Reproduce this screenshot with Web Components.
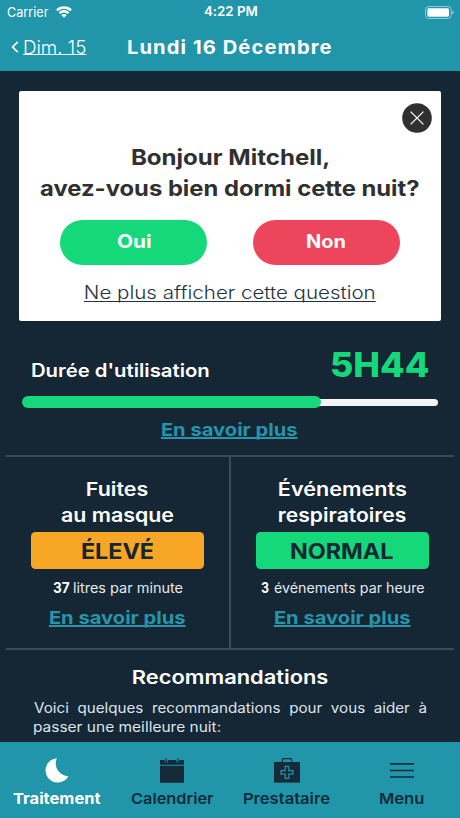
<!DOCTYPE html>
<html lang="fr">
<head>
<meta charset="utf-8">
<title>Lundi 16 Décembre</title>
<style>
  html, body { margin: 0; height: 100%; }
  body { background: #152634; font-family: Inter, "Open Sans", sans-serif; overflow: hidden; }
</style>
</head>
<body>
<sleep-app></sleep-app>
<script>
const define = (name, html, setup) => {
  const t = document.createElement('template');
  t.innerHTML = html;
  customElements.define(name, class extends HTMLElement {
    connectedCallback() {
      if (this.shadowRoot) return;
      this.attachShadow({ mode: 'open' }).append(t.content.cloneNode(true));
      if (setup) setup(this, this.shadowRoot);
    }
  });
};

/* One line of text stretched so that its ink spans the width given in w. */
const ctx = document.createElement('canvas').getContext('2d');
define('fit-text', `
  <style>
    :host { display: block; flex: none; text-align: left; }
    span { display: block; width: max-content; white-space: pre; transform-origin: 0 50%; font-variant-ligatures: none; font-feature-settings: "calt" 0; }
    :host([u]) span { text-decoration: underline; text-decoration-skip-ink: none;
      text-decoration-thickness: var(--ut, 1.3px); text-underline-offset: var(--uo, 1.6px); }
  </style><span><slot></slot></span>`, (el, root) => {
  const w = +el.getAttribute('w'), size = +el.getAttribute('s'), weight = el.getAttribute('wt') || 400;
  const line = el.getAttribute('l') || 24, ls = el.getAttribute('ls') || 0, ws = el.getAttribute('ws') || 0;
  Object.assign(el.style, { width: w + 'px', height: line + 'px', lineHeight: line + 'px',
    fontSize: size + 'px', fontWeight: weight, letterSpacing: ls + 'px', wordSpacing: ws + 'px' });
  ctx.font = `${weight} ${size}px Inter, "Open Sans", sans-serif`;
  ctx.letterSpacing = ls + 'px';
  ctx.wordSpacing = ws + 'px';
  const m = ctx.measureText(el.textContent);
  const k = w / (m.actualBoundingBoxRight + m.actualBoundingBoxLeft);
  root.querySelector('span').style.transform = `translateX(${m.actualBoundingBoxLeft * k}px) scaleX(${k})`;
});

define('status-bar', `
  <style>
    :host { display: grid; grid-template-columns: 1fr auto 1fr; align-items: center; height: 24px; padding: 0 6px 0 7px; color: #fff; }
    div { display: flex; align-items: center; gap: 7px; }
    svg { display: block; }
    .r { justify-content: flex-end; }
  </style>
  <div><fit-text w="41.5" s="13" l="24">Carrier</fit-text>
    <svg width="16" height="12" viewBox="0 0 16 12" fill="none" stroke="#fff" stroke-width="2.3">
      <path d="M.9 4.4a10.1 10.1 0 0 1 14.2 0"/><path d="M3.5 7.1a6.4 6.4 0 0 1 9 0"/><path d="M8 11.8 5.4 9.1a3.8 3.8 0 0 1 5.2 0z" fill="#fff" stroke="none"/></svg></div>
  <fit-text w="53" s="12.8" wt="600" l="24">4:22 PM</fit-text>
  <div class="r"><svg width="29" height="13" viewBox="0 0 29 13"><rect x=".5" y=".5" width="25.6" height="12" rx="3.2" fill="none" stroke="#fff" stroke-opacity=".5"/><rect x="2.4" y="2.3" width="21.6" height="8.4" rx="1.4" fill="#fff"/><path d="M27.3 4.6v3.8q1.4-.6 1.4-1.9t-1.4-1.9z" fill="#fff" opacity=".6"/></svg></div>`);

define('day-header', `
  <style>
    :host { display: block; height: 71px; background: #2195a9; color: #fff; }
    nav { display: flex; align-items: center; padding: 10.5px 0 0 11px; }
    a { display: flex; align-items: center; gap: 4.5px; width: 117px; }
  </style>
  <status-bar></status-bar>
  <nav><a><svg width="8" height="12" viewBox="0 0 8 12" fill="none" stroke="#fff" stroke-width="1.7"><path d="M6.8.8 1.6 6l5.2 5.2"/></svg><fit-text u w="61.5" s="18.2" wt="300" style="--uo:0.3px">Dim. 15</fit-text></a>
  <fit-text w="203.5" s="18.6" wt="700" ls="1">Lundi 16 Décembre</fit-text></nav>`);

define('pill-button', `
  <style>:host { display: flex; justify-content: center; box-sizing: border-box; width: 147px; height: 45px; padding-top: 9px; border-radius: 23px; background: var(--c); color: #fff; }</style><slot></slot>`);

define('question-card', `
  <style>
    :host { display: flex; flex-direction: column; align-items: center; position: relative; box-sizing: border-box;
      width: 422px; height: 229.5px; margin: 20px auto 0; padding-top: 51px; border-radius: 2px; background: #fff; color: #303031; }
    svg { position: absolute; top: 11.5px; right: 9.5px; }
    .b { display: flex; gap: 46px; margin: 16px 0 15.5px; }
    .n { color: #22323f; }
  </style>
  <svg width="30" height="30" viewBox="0 0 30 30"><circle cx="15" cy="15" r="14.8" fill="#303031"/><path d="m8.6 8.6 12.8 12.8m0-12.8L8.6 21.4" stroke="#fff" stroke-width="1.3" fill="none"/></svg>
  <fit-text w="197" s="21.6" wt="700" l="31">Bonjour Mitchell,</fit-text>
  <fit-text w="379.5" s="21.6" wt="700" l="31">avez-vous bien dormi cette nuit?</fit-text>
  <div class="b"><pill-button style="--c:#15d87a"><fit-text w="33.5" s="18.2" wt="700">Oui</fit-text></pill-button><pill-button style="--c:#ed465c"><fit-text w="38.5" s="18.2" wt="700">Non</fit-text></pill-button></div>
  <fit-text class="n" u w="290" s="18" wt="300">Ne plus afficher cette question</fit-text>`);

define('more-link', `
  <style>:host { display: block; color: #2795a9; }</style>
  <fit-text u w="135.5" s="18" wt="700" style="--ut:1.6px;--uo:1px">En savoir plus</fit-text>`);

define('usage-panel', `
  <style>
    :host { display: flex; flex-direction: column; align-items: center; height: 134.5px; color: #fff; }
    .t { display: flex; justify-content: space-between; align-items: flex-start; width: 397px; padding: 32px 0 0 1px; height: 43.5px; }
    .t :last-child { color: #15d87a; margin-top: -9.5px; }
    .bar { display: flex; align-items: center; width: 416px; height: 12px; margin-bottom: 10px; }
    .bar i { width: 298.5px; height: 12px; border-radius: 6px; background: #15d87a; z-index: 1; }
    .bar b { flex: 1; margin-left: -8px; height: 7px; border-radius: 4px; background: #f3f4f5; }
  </style>
  <div class="t"><fit-text w="177.5" s="18.4" wt="600" l="35">Durée d'utilisation</fit-text><fit-text w="98" s="34" wt="800" l="43">5H44</fit-text></div>
  <div class="bar"><i></i><b></b></div>
  <more-link></more-link>`);

define('metric-tile', `
  <style>
    :host { display: flex; flex-direction: column; align-items: center; color: #fff; padding-top: 20px; }
    .badge { display: flex; justify-content: center; box-sizing: border-box; width: 173px; height: 36.5px; padding-top: 7px; margin: 4px 0 7px; border-radius: 4.5px; background: var(--c); color: #152634; }
    .v { display: flex; gap: 4.5px; color: #e4eaef; margin-bottom: 6.5px; }
  </style>
  <slot name="title"></slot>
  <div class="badge"><slot name="level"></slot></div>
  <div class="v"><slot name="value"></slot></div>
  <more-link></more-link>`);

define('metric-grid', `
  <style>
    :host { display: grid; grid-template-columns: 1fr 1fr; box-sizing: border-box; width: 448px; height: 195px; margin: 0 auto;
      border: solid #3b4b5a; border-width: 2.4px 0 2.4px; }
    metric-tile:first-of-type { margin-left: -1px; }
    metric-tile + metric-tile { border-left: 2px solid #3b4b5a; margin-left: -1px; }
    [wt="700"][s="14"] { color: #fff; }
  </style>
  <metric-tile style="--c:#f7a626">
    <fit-text slot="title" w="61" s="18.6" wt="600" l="25.5">Fuites</fit-text>
    <fit-text slot="title" w="113" s="18.6" wt="600" l="25.5">au masque</fit-text>
    <fit-text slot="level" w="71" s="21.3" wt="700">ÉLEVÉ</fit-text>
    <fit-text slot="value" w="16.5" s="14" wt="700">37</fit-text><fit-text slot="value" w="109" s="13.8" wt="400">litres par minute</fit-text>
  </metric-tile>
  <metric-tile style="--c:#15d87a">
    <fit-text slot="title" w="127.5" s="18.6" wt="600" l="25.5">Événements</fit-text>
    <fit-text slot="title" w="127" s="18.6" wt="600" l="25.5">respiratoires</fit-text>
    <fit-text slot="level" w="102.5" s="21.3" wt="700">NORMAL</fit-text>
    <fit-text slot="value" w="8" s="14" wt="700">3</fit-text><fit-text slot="value" w="150.5" s="13.8" wt="400">événements par heure</fit-text>
  </metric-tile>`);

define('advice-panel', `
  <style>
    :host { display: flex; flex-direction: column; align-items: center; flex: 1; padding-top: 16px; color: #fff; }
    p { margin: 8px 0 0; width: 393px; color: #dde5eb; }
  </style>
  <fit-text w="195" s="18.8" wt="600">Recommandations</fit-text>
  <p><fit-text w="392" s="14" l="19" ws="4">Voici quelques recommandations pour vous aider à</fit-text>
  <fit-text w="186" s="14" l="19">passer une meilleure nuit:</fit-text></p>`);

define('tab-item', `
  <style>
    :host { display: flex; flex-direction: column; align-items: center; padding: 15px 1px 0 0; color: #122b3a; }
    :host([active]) { color: #fff; }
    ::slotted(svg) { display: block; margin-bottom: 3px; }
  </style><slot></slot>`);

define('tab-bar', `
  <style>:host { display: grid; grid-template-columns: repeat(4, 115px); height: 76px; background: #2195a9; }</style>
  <tab-item active><svg width="26" height="27" viewBox="0 0 26 27"><path d="M12.8 1.2A12.2 12.2 0 1 0 24.4 19.3 13 13 0 0 1 12.8 1.2z" fill="#fff"/></svg><fit-text w="88" s="15.2" wt="700">Traitement</fit-text></tab-item>
  <tab-item><svg width="26" height="27" viewBox="0 0 26 27"><path fill="#152b3a" d="M1 3h24v4.7H1zM1 8.7h24v17H1z"/><path d="M7.3 2v3.2M18.7 2v3.2" stroke="#2195a9" stroke-width="3"/><path d="M7.3 1.6v4.2M18.7 1.6v4.2" stroke="#152b3a" stroke-width="1.3"/></svg><fit-text w="82.5" s="15.2" wt="600">Calendrier</fit-text></tab-item>
  <tab-item><svg width="26" height="27" viewBox="0 0 26 27"><path fill="#152b3a" d="M0 5h26v20.6H0z"/><path d="M8.4 5V2.9q0-1.3 1.3-1.3h6.6q1.3 0 1.3 1.3V5" fill="none" stroke="#152b3a" stroke-width="1.3"/><path d="M11.2 9.4h3.6v4.2H19v3.6h-4.2v4.2h-3.6v-4.2H7v-3.6h4.2z" fill="none" stroke="#2195a9" stroke-width="1.2"/></svg><fit-text w="86" s="15.2" wt="600">Prestataire</fit-text></tab-item>
  <tab-item><svg width="26" height="27" viewBox="0 0 26 27"><path d="M1 6.8h24M1 13.5h24M1 20h24" stroke="#152b3a" stroke-width="1.7"/></svg><fit-text w="44" s="15.2" wt="600">Menu</fit-text></tab-item>`);

define('sleep-app', `
  <style>:host { display: flex; flex-direction: column; width: 460px; height: 818px; background: #152634; }</style>
  <day-header></day-header>
  <question-card></question-card>
  <usage-panel></usage-panel>
  <metric-grid></metric-grid>
  <advice-panel></advice-panel>
  <tab-bar></tab-bar>`);
</script>
</body>
</html>
